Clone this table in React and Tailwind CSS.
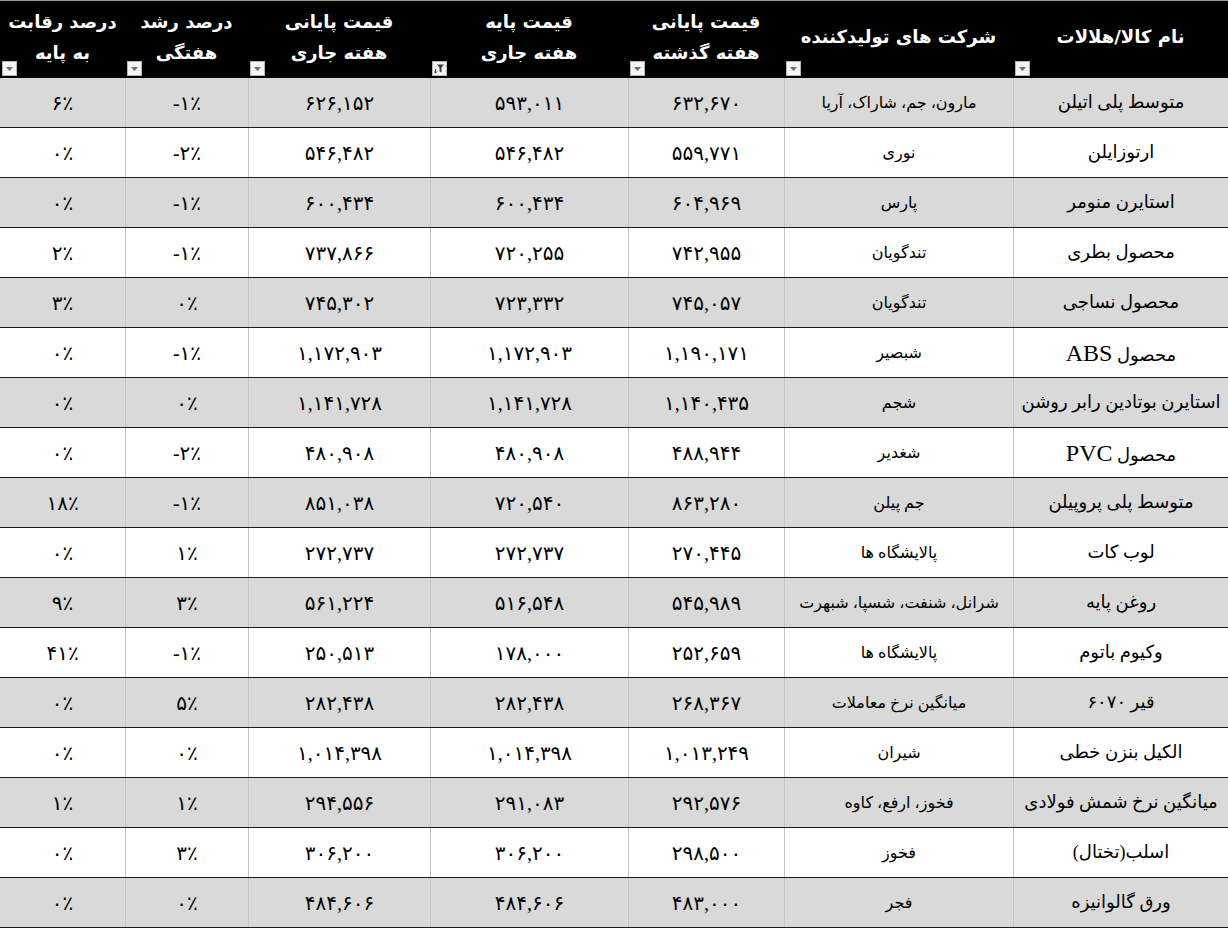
import React from "react";

const cols = ["w-[215px]", "w-[229px]", "w-[156px]", "w-[198px]", "w-[182px]", "w-[123px]", "w-[125px]"];

const rows = [
  ["متوسط پلی اتیلن", "مارون، جم، شاراک، آریا", "۶۳۲,۶۷۰", "۵۹۳,۰۱۱", "۶۲۶,۱۵۲", "-۱٪", "۶٪"],
  ["ارتوزایلن", "نوری", "۵۵۹,۷۷۱", "۵۴۶,۴۸۲", "۵۴۶,۴۸۲", "-۲٪", "۰٪"],
  ["استایرن منومر", "پارس", "۶۰۴,۹۶۹", "۶۰۰,۴۳۴", "۶۰۰,۴۳۴", "-۱٪", "۰٪"],
  ["محصول بطری", "تندگویان", "۷۴۲,۹۵۵", "۷۲۰,۲۵۵", "۷۳۷,۸۶۶", "-۱٪", "۲٪"],
  ["محصول نساجی", "تندگویان", "۷۴۵,۰۵۷", "۷۲۳,۳۳۲", "۷۴۵,۳۰۲", "۰٪", "۳٪"],
  ["محصول ABS", "شبصیر", "۱,۱۹۰,۱۷۱", "۱,۱۷۲,۹۰۳", "۱,۱۷۲,۹۰۳", "-۱٪", "۰٪"],
  ["استایرن بوتادین رابر روشن", "شجم", "۱,۱۴۰,۴۳۵", "۱,۱۴۱,۷۲۸", "۱,۱۴۱,۷۲۸", "۰٪", "۰٪"],
  ["محصول PVC", "شغدیر", "۴۸۸,۹۴۴", "۴۸۰,۹۰۸", "۴۸۰,۹۰۸", "-۲٪", "۰٪"],
  ["متوسط پلی پروپیلن", "جم پیلن", "۸۶۳,۲۸۰", "۷۲۰,۵۴۰", "۸۵۱,۰۳۸", "-۱٪", "۱۸٪"],
  ["لوب کات", "پالایشگاه ها", "۲۷۰,۴۴۵", "۲۷۲,۷۳۷", "۲۷۲,۷۳۷", "۱٪", "۰٪"],
  ["روغن پایه", "شرانل، شنفت، شسپا، شبهرت", "۵۴۵,۹۸۹", "۵۱۶,۵۴۸", "۵۶۱,۲۲۴", "۳٪", "۹٪"],
  ["وکیوم باتوم", "پالایشگاه ها", "۲۵۲,۶۵۹", "۱۷۸,۰۰۰", "۲۵۰,۵۱۳", "-۱٪", "۴۱٪"],
  ["قیر ۶۰۷۰", "میانگین نرخ معاملات", "۲۶۸,۳۶۷", "۲۸۲,۴۳۸", "۲۸۲,۴۳۸", "۵٪", "۰٪"],
  ["الکیل بنزن خطی", "شیران", "۱,۰۱۳,۲۴۹", "۱,۰۱۴,۳۹۸", "۱,۰۱۴,۳۹۸", "۰٪", "۰٪"],
  ["میانگین نرخ شمش فولادی", "فخوز، ارفع، کاوه", "۲۹۲,۵۷۶", "۲۹۱,۰۸۳", "۲۹۴,۵۵۶", "۱٪", "۱٪"],
  ["اسلب(تختال)", "فخوز", "۲۹۸,۵۰۰", "۳۰۶,۲۰۰", "۳۰۶,۲۰۰", "۳٪", "۰٪"],
  ["ورق گالوانیزه", "فجر", "۴۸۳,۰۰۰", "۴۸۴,۶۰۶", "۴۸۴,۶۰۶", "۰٪", "۰٪"],
];

const headers = [
  ["نام کالا/هلالات"],
  ["شرکت های تولیدکننده"],
  ["قیمت پایانی", "هفته گذشته"],
  ["قیمت پایه", "هفته جاری"],
  ["قیمت پایانی", "هفته جاری"],
  ["درصد رشد", "هفتگی"],
  ["درصد رقابت", "به پایه"],
];

function FilterButton({ active }) {
  return (
    <div className="absolute left-[2px] bottom-[2px] w-[15px] h-[15px] bg-[#f4f4f4] border border-[#b5b5b5] flex items-center justify-center">
      {active ? (
        <svg width="11" height="11" viewBox="0 0 11 11">
          <path d="M3 1.5 H10 L7.5 4.5 V9.5 L5.5 8.5 V4.5 Z" fill="#3a3a3a" />
          <path d="M1.5 6 V10 M0 8.5 L1.5 10 L3 8.5" stroke="#3a3a3a" strokeWidth="1" fill="none" />
        </svg>
      ) : (
        <svg width="9" height="6" viewBox="0 0 9 6">
          <path d="M1 1 H8 L4.5 5 Z" fill="#6b6b6b" />
        </svg>
      )}
    </div>
  );
}

const fa = { fontFamily: '"Liberation Serif", "DejaVu Sans", serif' };
const faHead = { fontFamily: '"DejaVu Sans", sans-serif' };

function NameText({ text }) {
  const parts = text.split(/([A-Z]+)/);
  return (
    <span>
      {parts.map((p, i) =>
        /^[A-Z]+$/.test(p) ? (
          <span key={i} className="text-[24px]">{p}</span>
        ) : (
          <span key={i}>{p}</span>
        )
      )}
    </span>
  );
}

export default function App() {
  return (
    <div className="w-[1228px] h-[928px] bg-white overflow-hidden" dir="rtl">
      <div className="flex h-[78px] bg-black border-t border-[#9a9a9a]">
        {headers.map((h, i) => (
          <div
            key={i}
            className={`${cols[i]} relative flex flex-col items-center justify-center text-white font-bold text-[18px] leading-[31px] pb-[6px]`}
            style={faHead}
          >
            {h.map((l, j) => (
              <div key={j}>{l}</div>
            ))}
            <FilterButton active={i === 3} />
          </div>
        ))}
      </div>
      {rows.map((r, ri) => (
        <div
          key={ri}
          className={`flex h-[50px] border-b border-[#1a1a1a] ${ri % 2 === 0 ? "bg-[#d9d9d9]" : "bg-white"}`}
        >
          {r.map((c, ci) => (
            <div
              key={ci}
              className={`${cols[ci]} flex items-center justify-center text-black ${ci < 6 ? "border-l border-[#c4c4c4]" : ""} ${
                ci === 0 ? "text-[18px]" : ci === 1 ? "text-[16px]" : "text-[20px]"
              }`}
              style={fa}
            >
              {ci >= 2 ? (
                <span dir="ltr" className={ci >= 5 ? "tracking-[2px]" : ""}>{c}</span>
              ) : ci === 0 ? (
                <NameText text={c} />
              ) : (
                c
              )}
            </div>
          ))}
        </div>
      ))}
    </div>
  );
}
